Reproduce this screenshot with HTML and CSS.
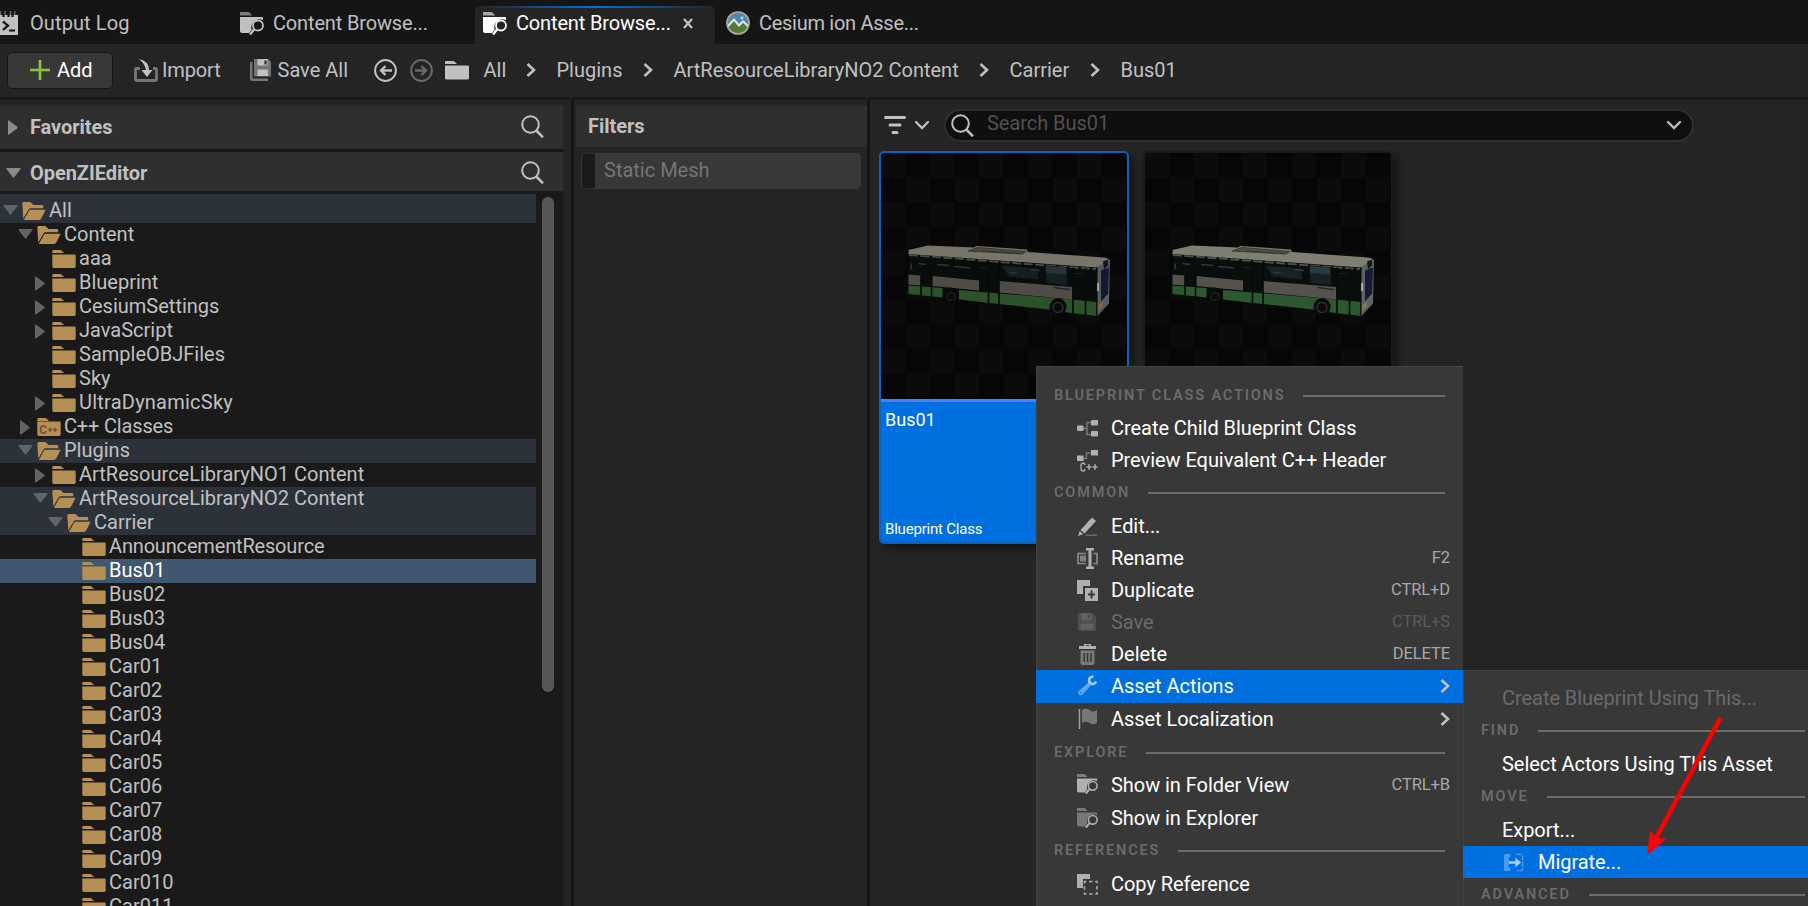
FILE: index.html
```html
<!DOCTYPE html>
<html lang="en">
<head>
<meta charset="utf-8">
<title>Content Browser</title>
<link rel="stylesheet" href="styles.css">
</head>
<body>
<svg class="defs" width="0" height="0">
  <symbol id="folder" viewBox="0 0 24 19"><path d="M0 1q0-1 1-1h7q1 0 2 1l2 2H0z"/><path d="M0 4.600h23q1 0 1 1V17q0 1.500-1.500 1.500H1.500Q0 18.500 0 17z"/></symbol>
  <symbol id="open" viewBox="0 0 24 19"><path d="M0 1.500Q0 0 1.500 0h6q1 0 2 1l2 2h9q1 0 1 1v2.500H8.500q-1.200 0-2 1.200L1 17z"/><path d="M7.500 8H24l-4.600 9q-.8 1.500-2.400 1.500H1.500z"/></symbol>
  <symbol id="cpp" viewBox="0 0 24 19"><path d="M0 1q0-1 1-1h7q1 0 2 1l2 2H0z"/><path d="M0 3.600h23q1 0 1 1V17q0 1.500-1.500 1.500H1.500Q0 18.500 0 17z"/><text x="2" y="16.500" font-size="13.500" font-weight="700" textLength="8" lengthAdjust="spacingAndGlyphs" fill="#6d5635">C</text><path d="M11 12h4.500M13.200 9.700v4.600M16 12h4.500M18.200 9.700v4.600" stroke="#6d5635" stroke-width="1.500"/></symbol>
  <symbol id="down" viewBox="0 0 15 10"><path d="M1 0h13q1 .3.500 1L8.200 9.300q-.7.700-1.400 0L.5 1Q0 .3 1 0z"/></symbol>
  <symbol id="right" viewBox="0 0 10 15"><path d="M0 1q.3-1 1-.5l8.300 6.300q.7.700 0 1.400L1 14.500Q.3 15 0 14z"/></symbol>
  <symbol id="search" viewBox="0 0 23 23"><g fill="none" stroke="currentColor" stroke-width="2"><circle cx="9.500" cy="9.500" r="8.300"/><path d="M15.300 15.500L22 22.300" stroke-width="2.500"/></g></symbol>
  <symbol id="chev" viewBox="0 0 10 14"><path d="M1.500 1l6.500 6-6.500 6" fill="none" stroke="currentColor" stroke-width="2.600"/></symbol>
  <symbol id="chevdown" viewBox="0 0 14 9"><path d="M1 1l6 6 6-6" fill="none" stroke="currentColor" stroke-width="2.300" stroke-linecap="round"/></symbol>
  <symbol id="browse" viewBox="0 0 24 24"><path d="M0 0h8q1 0 2 1l2 2.500H0z" opacity=".6"/><path d="M0 5h22.500q.5 0 .5 1v2.200a8 8 0 0 0-11.300 9.500L9 21H2q-2 0-2-2z"/><g fill="none" stroke="currentColor" stroke-width="1.800"><circle cx="18" cy="13.500" r="5"/><path d="M14.300 17.300L10 22.500" stroke-width="2.400"/></g></symbol>
  <symbol id="disk" viewBox="0 0 20 20"><path d="M1 0h15l4 4v15q0 1-1 1H1q-1 0-1-1V1q0-1 1-1z" opacity=".55"/><path d="M4 0h11v8H4zm7 1.500v5h2.500v-5zM3 12h14v6H3z" fill-rule="evenodd"/></symbol>
  <symbol id="bus" viewBox="0 0 246 246">
    <path d="M26.500 98L215 112l13-6-1 45-12 11.500L165 156 112 150.500 26.500 140z" fill="#080c0b"/>
    <path class="trim" d="M26.500 96.500L46 92l46 2 2.500-1.500 50 3.500 1.500 2.500 76 5.500q6 1 5.500 4l-12.500 6L26.500 100.500z"/>
    <path d="M86 97.500l10-3.500 48 4-4 2.500zM100 97.500l38 2.500" fill="#4d4a3d" stroke="#39372e"/>
    <path d="M27 101.500l40 3 70 5.500 77 5.500" fill="none" stroke="#4a4c43" stroke-width="1.800" stroke-dasharray="9 2.500"/>
    <path d="M120 112l36 3v11l-30-3zM163 112l22 1.500v18l-20-2z" fill="#14201f"/><path d="M164 113l20 1v7l-20-1.500z" fill="#26343a"/>
    <path d="M29 110v6M36 110l8 1M55 111l12 1M72 113l16 1.500M127 119l8 .5M148 116l10 1" stroke="#2d3531" stroke-width="1.600"/>
    <path class="side" d="M26.500 121l12.500 1v10l-12.500-1zM50.500 122.500l46.500 4.500v10l-46.500-4.500zM117 127.500l73.500 6v12.500l-73.500-7z"/>
    <path class="green" d="M26.500 132l34 2.500v9.500l-34-3.500zM77 136.500l113 9.500 25 2.500v14L185 159l-18-3-55-6-35-4z"/>
    <path d="M39 122v20M49.500 122v21M106.500 110v40M117 110v42M191 114v46M203.500 115v49M215 114v49" stroke="#070a08" stroke-width="1.600"/>
    <path d="M97 114h9M192 120h10" stroke="#181c1a" stroke-width="1"/>
    <ellipse cx="69" cy="142" rx="7" ry="8" fill="#090909"/><ellipse cx="176" cy="153.500" rx="8.500" ry="9" fill="#090909"/>
    <circle cx="176" cy="154" r="5" fill="none" stroke="#2b2c2b" stroke-width="1.500"/><circle cx="69" cy="143" r="4" fill="none" stroke="#1d1e1d" stroke-width="1.500"/>
    <path d="M215.500 113l12.500-7-1 44-11.500 12.500z" fill="#555b60"/>
    <path d="M219 117l8-3-1 26-7 8z" fill="#121a30"/><path d="M221 108l5-2v6l-4 4z" fill="#12171c"/>
    <path d="M215 130l2-1v8l-2 1z" fill="#a1a49e"/><path d="M172 134l7 1 9 1" fill="none" stroke="#242424" stroke-width="1.500"/>
    <path d="M216 152l5-4v5l-5 5z" fill="#806850"/>
  </symbol>
</svg>

<header class="tabs">
  <div class="tab tab-log">
    <svg class="log-icon" viewBox="0 0 18 24"><path d="M-1 2h19v22H-1z" fill="#c0c0c0"/><path d="M-1 2h19v2H-1z" fill="#151515"/><path d="M3.500 1v5M8.500 1v5M12.500 1v5" stroke="#151515" stroke-width="2.200"/><path d="M5 0v4M10.500 0v4M14.700 0v4M.5 0v4" stroke="#666" stroke-width="1.500"/><path d="M3 10.500l5 4.200L3 19" fill="none" stroke="#151515" stroke-width="2.300"/><path d="M9 19.500h6" stroke="#151515" stroke-width="2"/></svg>
    <span class="t">Output Log</span>
  </div>
  <div class="tab tab-cb"><svg class="i24"><use href="#browse"/></svg><span class="t">Content Browse...</span></div>
  <div class="tab active"><svg class="i24"><use href="#browse"/></svg><span class="t">Content Browse...</span><svg class="close" viewBox="0 0 10 11"><path d="M1 1l8 9M9 1L1 10" stroke="currentColor" stroke-width="2.200"/></svg></div>
  <div class="tab tab-cesium">
    <svg class="i24" viewBox="0 0 24 24"><circle cx="12" cy="12" r="11" fill="#5385b2"/><path d="M2 16l6-7 5 5 3-3 6 5q-3 7-10 7T2 16z" fill="#547836"/><path d="M1.500 15.500L8 8.500l5 6 4-4 5.500 5" fill="none" stroke="#e1e5df" stroke-width="2"/><circle cx="16" cy="7" r="1.400" fill="#bcd3e5"/><circle cx="12" cy="12" r="11" fill="none" stroke="#aaa99e" stroke-width="1.700"/></svg>
    <span class="t">Cesium ion Asse...</span>
  </div>
</header>

<nav class="toolbar">
  <div class="add"><svg viewBox="0 0 20 20"><path d="M10 0v20M0 10h20" stroke="#8bc53f" stroke-width="2.600"/></svg><span class="t">Add</span></div>
  <svg class="import" viewBox="0 0 24 23"><path d="M6 9.500H2.500q-1 0-1 1V20q0 1.500 1.500 1.500h18q1.500 0 1.500-1.500V10.500q0-1-1-1H19" fill="none" stroke="#757575" stroke-width="2.800"/><path d="M5 0q10 2 10 11h3.500l-5.500 7-5.500-7H12Q11 5 5 0z" fill="#c0c0c0"/></svg>
  <span class="t import-t">Import</span>
  <svg class="saveall" viewBox="0 0 21 22"><path d="M0 3h2.500v16.500H18V22H2q-2 0-2-2z" fill="#757575"/><path d="M4 0h14l3 3v14.500H4z" fill="#757575"/><path d="M7.500 0h10v6.500h-10zM7.500 10.500H18V17H7.500z" fill="#c0c0c0"/><path d="M14.500 1.500h2v4h-2z" fill="#242424"/></svg>
  <span class="t saveall-t">Save All</span>
  <svg class="nav-back" viewBox="0 0 23 23"><g fill="none" stroke="#c0c0c0" stroke-width="2"><circle cx="11.500" cy="11.500" r="10.400"/><path d="M18 11.500H7M11.500 7L7 11.500l4.500 4.500" stroke-width="2.400"/></g></svg>
  <svg class="nav-fwd" viewBox="0 0 23 23"><g fill="none" stroke="#696969" stroke-width="2"><circle cx="11.500" cy="11.500" r="10.400"/><path d="M5 11.500h11M11.500 7l4.500 4.500-4.500 4.500" stroke-width="2.400"/></g></svg>
  <svg class="crumb-folder"><use href="#folder"/></svg>
  <div class="crumbs">
    <span class="t c1">All</span><svg class="chev"><use href="#chev"/></svg>
    <span class="t c2">Plugins</span><svg class="chev"><use href="#chev"/></svg>
    <span class="t c3">ArtResourceLibraryNO2 Content</span><svg class="chev"><use href="#chev"/></svg>
    <span class="t c4">Carrier</span><svg class="chev"><use href="#chev"/></svg>
    <span class="t c5">Bus01</span>
  </div>
</nav>

<main class="main">
  <aside class="sources">
    <div class="head fav"><svg class="ar"><use href="#right"/></svg><b>Favorites</b><svg class="search"><use href="#search"/></svg></div>
    <div class="head proj"><svg class="ad"><use href="#down"/></svg><b>OpenZIEditor</b><svg class="search"><use href="#search"/></svg></div>
    <div class="tree">
      <div class="rows">
        <div class="row d0 path first"><svg class="ad"><use href="#down"/></svg><svg class="fo"><use href="#open"/></svg><span>All</span></div>
        <div class="row d1"><svg class="ad"><use href="#down"/></svg><svg class="fo"><use href="#open"/></svg><span>Content</span></div>
        <div class="row d2"><i></i><svg class="fo"><use href="#folder"/></svg><span>aaa</span></div>
        <div class="row d2"><svg class="ar"><use href="#right"/></svg><svg class="fo"><use href="#folder"/></svg><span>Blueprint</span></div>
        <div class="row d2"><svg class="ar"><use href="#right"/></svg><svg class="fo"><use href="#folder"/></svg><span>CesiumSettings</span></div>
        <div class="row d2"><svg class="ar"><use href="#right"/></svg><svg class="fo"><use href="#folder"/></svg><span>JavaScript</span></div>
        <div class="row d2"><i></i><svg class="fo"><use href="#folder"/></svg><span>SampleOBJFiles</span></div>
        <div class="row d2"><i></i><svg class="fo"><use href="#folder"/></svg><span>Sky</span></div>
        <div class="row d2"><svg class="ar"><use href="#right"/></svg><svg class="fo"><use href="#folder"/></svg><span class="wide">UltraDynamicSky</span></div>
        <div class="row d1"><svg class="ar"><use href="#right"/></svg><svg class="fo"><use href="#cpp"/></svg><span class="tight">C++ Classes</span></div>
        <div class="row d1 path"><svg class="ad"><use href="#down"/></svg><svg class="fo"><use href="#open"/></svg><span>Plugins</span></div>
        <div class="row d2"><svg class="ar"><use href="#right"/></svg><svg class="fo"><use href="#folder"/></svg><span>ArtResourceLibraryNO1 Content</span></div>
        <div class="row d2 path"><svg class="ad"><use href="#down"/></svg><svg class="fo"><use href="#open"/></svg><span>ArtResourceLibraryNO2 Content</span></div>
        <div class="row d3 path"><svg class="ad"><use href="#down"/></svg><svg class="fo"><use href="#open"/></svg><span>Carrier</span></div>
        <div class="row d4"><i></i><svg class="fo"><use href="#folder"/></svg><span class="tight">AnnouncementResource</span></div>
        <div class="row d4 selected"><i></i><svg class="fo"><use href="#folder"/></svg><span>Bus01</span></div>
        <div class="row d4"><i></i><svg class="fo"><use href="#folder"/></svg><span>Bus02</span></div>
        <div class="row d4"><i></i><svg class="fo"><use href="#folder"/></svg><span>Bus03</span></div>
        <div class="row d4"><i></i><svg class="fo"><use href="#folder"/></svg><span>Bus04</span></div>
        <div class="row d4"><i></i><svg class="fo"><use href="#folder"/></svg><span>Car01</span></div>
        <div class="row d4"><i></i><svg class="fo"><use href="#folder"/></svg><span>Car02</span></div>
        <div class="row d4"><i></i><svg class="fo"><use href="#folder"/></svg><span>Car03</span></div>
        <div class="row d4"><i></i><svg class="fo"><use href="#folder"/></svg><span>Car04</span></div>
        <div class="row d4"><i></i><svg class="fo"><use href="#folder"/></svg><span>Car05</span></div>
        <div class="row d4"><i></i><svg class="fo"><use href="#folder"/></svg><span>Car06</span></div>
        <div class="row d4"><i></i><svg class="fo"><use href="#folder"/></svg><span>Car07</span></div>
        <div class="row d4"><i></i><svg class="fo"><use href="#folder"/></svg><span>Car08</span></div>
        <div class="row d4"><i></i><svg class="fo"><use href="#folder"/></svg><span>Car09</span></div>
        <div class="row d4"><i></i><svg class="fo"><use href="#folder"/></svg><span>Car010</span></div>
        <div class="row d4"><i></i><svg class="fo"><use href="#folder"/></svg><span>Car011</span></div>
      </div>
      <div class="scrollbar"></div>
    </div>
  </aside>
  <section class="filters">
    <div class="head"><b>Filters</b></div>
    <div class="pill"><span>Static Mesh</span></div>
  </section>
  <section class="assets">
    <div class="searchbar">
      <svg class="funnel" viewBox="0 0 22 18"><path d="M1.500 1.500h19M6 9h10M9 16.500h4" stroke="#c0c0c0" stroke-width="3" stroke-linecap="round"/></svg>
      <svg class="chevdown"><use href="#chevdown"/></svg>
      <div class="field"><svg class="search"><use href="#search"/></svg><span>Search Bus01</span><svg class="chevdown"><use href="#chevdown"/></svg></div>
    </div>
    <div class="tiles">
      <div class="tile on">
        <div class="thumb"><svg class="bus warm"><use href="#bus"/></svg></div>
        <div class="info"><span class="name">Bus01</span><span class="kind">Blueprint Class</span></div>
      </div>
      <div class="tile"><div class="thumb"><svg class="bus cool"><use href="#bus"/></svg></div><div class="info"></div></div>
    </div>
  </section>
</main>

<div class="menu ctx">
  <div class="sec h33"><b>BLUEPRINT CLASS ACTIONS</b><hr></div>
  <div class="item"><svg viewBox="0 0 21 21"><path d="M5 10.500h5M10 4v13M9.500 4.500h5M9.500 16.500h5" fill="none" stroke="#777" stroke-width="1.500"/><rect y="7.500" width="6.500" height="5.500" rx="1"/><rect x="14" y="2" width="7" height="5.500" rx="1"/><rect x="14" y="13" width="7" height="5.500" rx="1"/></svg><span>Create Child Blueprint Class</span></div>
  <div class="item"><svg viewBox="0 0 21 21"><path d="M6 8.500h3.500V3h5" fill="none" stroke="#777" stroke-width="1.500"/><rect y="5.500" width="6.500" height="5.500"/><rect x="14" y="0" width="7" height="5.500"/><path d="M8 15q-.5-2-2-2t-2 2v4q0 2 2 2t2-2M9.500 17h5M12 14v6M15.500 17h5M18 14v6" fill="none" stroke="currentColor" stroke-width="1.300"/></svg><span>Preview Equivalent C++ Header</span></div>
  <div class="sec h34"><b>COMMON</b><hr></div>
  <div class="item"><svg viewBox="0 0 21 21"><path d="M3.500 14L15 1.500l4 3.500L7.500 17.500zM2.700 15l3.500 3.200L1 20z"/><path d="M9 18.500h11v1.500H8z" opacity=".4"/></svg><span>Edit...</span></div>
  <div class="item"><svg viewBox="0 0 21 21"><path d="M9 5.500H1v10h8M16.500 5.500h3.500v10h-3.500" fill="none" stroke="#888" stroke-width="1.700"/><path d="M3 7.500h6v6H3z" opacity=".6"/><path d="M9 0h8v2.500h-2.500v16H17V21H9v-2.500h2.500v-16H9z"/></svg><span>Rename</span><em>F2</em></div>
  <div class="item"><svg viewBox="0 0 21 21"><path d="M0 0h13v6H6v8H0z"/><path d="M8 8h13v13H8zm5.500 2.500v3H11v2h2.500v3h2v-3H18v-2h-2.500v-3z" fill-rule="evenodd"/></svg><span>Duplicate</span><em>CTRL+D</em></div>
  <div class="item off"><svg viewBox="-1 -1 22 22"><use href="#disk" width="19" height="19"/></svg><span>Save</span><em>CTRL+S</em></div>
  <div class="item"><svg viewBox="0 0 21 21"><path d="M2 2h17v3H2zM7 2V0h7v2h-1.500V1.200h-4V2z"/><path d="M3.500 6.500h14V19q0 2-2 2h-10q-2 0-2-2zm3 2.500v9H8V9zm3.300 0v9h1.500V9zm3.400 0v9h1.500V9z" fill-rule="evenodd" opacity=".55"/></svg><span>Delete</span><em>DELETE</em></div>
  <div class="item hot h33"><svg viewBox="0 0 21 21"><path d="M11.500 7.500l2.500 2.500-8.500 9.500q-2 1.500-3.700 0-1.500-1.700 0-3.500zM3 17.500a.8.800 0 1 0 1.500 0 .8.800 0 0 0-1.500 0z" fill="#62a7f0" fill-rule="evenodd"/><path d="M16.500 1.800A3.600 3.600 0 1 0 19 6.500" fill="none" stroke="#a9cff8" stroke-width="2.600"/></svg><span>Asset Actions</span><svg class="chev"><use href="#chev"/></svg></div>
  <div class="item h33"><svg viewBox="0 0 21 21"><path d="M2.500 1v20" stroke="#a0a0a0" stroke-width="1.500"/><path d="M5 2q4-3 7.500 0t7.500 0v13q-4 2.500-7.500 0T5 15z" fill="#777"/></svg><span>Asset Localization</span><svg class="chev"><use href="#chev"/></svg></div>
  <div class="sec h33"><b>EXPLORE</b><hr></div>
  <div class="item h33"><svg><use href="#browse"/></svg><span>Show in Folder View</span><em>CTRL+B</em></div>
  <div class="item"><svg viewBox="0 0 24 24"><path d="M0 0h8q1 0 2 1l2 2.500H0z" fill="#777"/><path d="M0 5h22.500q.5 0 .5 1v2.200a8 8 0 0 0-11.300 9.500L9 21H2q-2 0-2-2z" fill="#777"/><g fill="none" stroke="currentColor" stroke-width="1.800"><circle cx="18" cy="13.500" r="5"/><path d="M14.300 17.300L10 22.500" stroke-width="2.400"/></g></svg><span>Show in Explorer</span></div>
  <div class="sec h34"><b>REFERENCES</b><hr></div>
  <div class="item"><svg viewBox="0 0 21 21"><path d="M0 0h13v5H6v9H0z"/><path d="M7.500 7.500H20V20H7.500z" fill="none" stroke="currentColor" stroke-width="1.500" stroke-dasharray="3.500 2.700" stroke-dashoffset="1.700"/></svg><span>Copy Reference</span></div>
</div>

<div class="menu sub">
  <div class="item off h33"><span>Create Blueprint Using This...</span></div>
  <div class="sec h33"><b>FIND</b><hr></div>
  <div class="item h33"><span>Select Actors Using This Asset</span></div>
  <div class="sec h33"><b>MOVE</b><hr></div>
  <div class="item h33"><span>Export...</span></div>
  <div class="item hot"><svg viewBox="0 0 22 20"><path d="M7.500 1H3Q1 1 1 3v14q0 2 2 2h4.500v-3.500H6V4.500h1.500z" fill="#4b9bf1"/><path d="M14 1.500h4.500q2 0 2 2v13q0 2-2 2H14" fill="none" stroke="#4b9bf1" stroke-width="1.500" stroke-dasharray="5.500 1"/><path d="M6 8.800h7V5l6 5-6 5v-3.800H6z" fill="#a5cef8"/></svg><span>Migrate...</span></div>
  <div class="sec h34"><b>ADVANCED</b><hr></div>
</div>

<svg class="pointer" viewBox="0 0 80 145"><path d="M78.500 6.500L14 127" stroke="#fe0000" stroke-width="4.500" stroke-linecap="round"/><path d="M6 142l3-25 5.500 7 11 2z" fill="#fe0000"/></svg>
</body>
</html>
```
FILE: styles.css
```css
* { box-sizing: border-box; }
body { margin: 0; width: 1808px; height: 906px; overflow: hidden; position: relative; background: #242424; color: #c0c0c0; font: 20px/24px Roboto, sans-serif; white-space: nowrap; display: flex; flex-direction: column; }
svg { display: block; flex: none; fill: currentColor; overflow: visible; }
.defs { position: absolute; }
b { font-weight: 700; }

.tabs { flex: none; height: 44px; background: #151515; display: flex; align-items: flex-end; }
.tab { display: flex; align-items: center; height: 38px; padding-bottom: 4px; }
.i24 { width: 24px; height: 24px; }
.log-icon { width: 18px; height: 24px; }
.tab-log { width: 240px; gap: 12px; letter-spacing: .1px; }
.tab-cb { width: 235px; gap: 9px; letter-spacing: -.15px; }
.tab-cb .i24, .active .i24 { transform: translateY(1px); }
.active { width: 240px; padding-left: 8px; gap: 9px; letter-spacing: -.15px; color: #fff; background: linear-gradient(90deg, #242424, #0070e0 50%, #242424) top / 100% 2px no-repeat #242424; border-radius: 5px 5px 0 0; }
.close { width: 10px; height: 11px; margin-left: auto; margin-right: 22px; color: #c0c0c0; }
.tab-cesium { padding-left: 11px; gap: 9px; letter-spacing: -.28px; }

.toolbar { flex: none; height: 56px; border-bottom: 3px solid #1a1a1a; display: flex; align-items: center; padding: 0 0 1px 7px; }
.add { width: 106px; height: 37px; border: 1px solid #151515; border-radius: 5px; background: #383838; color: #fff; display: flex; align-items: center; padding-left: 22px; gap: 7px; }
.add svg { width: 20px; height: 20px; }
.import { width: 24px; height: 23px; margin: 1px 0 0 21px; }
.import-t { width: 87px; padding-left: 4px; letter-spacing: -.15px; }
.saveall { width: 21px; height: 22px; margin-left: 4.500px; }
.saveall-t { width: 103px; padding-left: 7px; }
.nav-back, .nav-fwd { width: 23px; height: 23px; }
.nav-fwd { margin-left: 13px; }
.crumb-folder { width: 24px; height: 19px; margin-left: 12px; }
.crumbs { display: flex; align-items: center; margin-left: 15px; }
.chev { width: 10px; height: 14px; margin-right: 21px; }
.c1 { width: 42px; } .c2 { width: 86px; } .c3 { width: 305px; } .c4 { width: 80px; }

.main { flex: 1; min-height: 0; display: flex; }
.sources { width: 574px; padding-right: 8px; border-right: 3px solid #151515; padding-top: 6px; display: flex; flex-direction: column; }
.head { flex: none; background: #2f2f2f; display: flex; align-items: center; }
.head .search { width: 23px; height: 23px; margin-left: auto; margin-right: 19px; }
.head b { letter-spacing: -.05px; }
.fav { height: 46px; border-bottom: 3px solid #151515; padding-bottom: 2px; }
.fav .ar { width: 10px; height: 15px; margin: 1px 12px 0 8px; color: #8b8b8b; }
.proj { height: 42px; border-bottom: 3px solid #1a1a1a; padding-top: 2px; }
.proj .ad { width: 15px; height: 10px; margin: 0 9.500px 0 5.500px; color: #8b8b8b; }
.tree { flex: 1; min-height: 0; overflow: hidden; background: #1a1a1a; display: flex; }
.rows { width: 536px; }
.row { height: 24px; display: flex; align-items: center; }
.row span { transform: translateY(-1px); }
.row .wide { letter-spacing: .23px; }
.row .tight { letter-spacing: -.17px; }
.row.first { height: 29px; padding-top: 5px; }
.row .ad { width: 15px; height: 10px; margin: 0 4.500px 0 2.500px; color: #636363; transform: translateY(-1px); }
.row .ar { width: 10px; height: 15px; margin: 1px 7px 0 5px; color: #636363; }
.row i { width: 22px; }
.row .fo { width: 24px; height: 18.500px; margin-right: 3px; color: #b68f54; }
.d1 { padding-left: 15px; } .d2 { padding-left: 30px; } .d3 { padding-left: 45px; } .d4 { padding-left: 60px; }
.path { background: #2c323a; }
.selected { background: #40576f; color: #fff; }
.scrollbar { width: 12px; height: 495px; margin: 3px 0 0 6px; border-radius: 6px; background: #575757; }

.filters { width: 296px; padding: 6px 0 0 2px; border-right: 3px solid #151515; }
.filters .head { height: 41px; padding: 0 0 1px 12px; }
.pill { margin: 6px 6px 0; height: 36px; border: 1px solid #383838; border-left: 13px solid #1a1a1a; border-radius: 5px; background: #383838; color: #757575; display: flex; align-items: center; padding: 0 0 2px 9px; box-shadow: -1px 0 0 #383838; }

.assets { flex: 1; padding-left: 9px; }
.searchbar { height: 51px; display: flex; align-items: center; padding: 0 0 1px 5px; }
.funnel { width: 22px; height: 18px; }
.chevdown { width: 14px; height: 9px; margin-left: 9px; }
.field { width: 750px; height: 33px; margin-left: 15px; border: 2px solid #2f2f2f; border-radius: 17px; background: #0f0f0f; color: #c0c0c0; display: flex; align-items: center; padding: 0 11px 0 5px; }
.field .search { width: 23px; height: 23px; margin-right: 13px; }
.field span { color: #505050; margin-top: -5px; letter-spacing: -.05px; }
.field .chevdown { margin-left: auto; }
.tiles { display: flex; gap: 14px; }
.tile { width: 250px; height: 393px; border: 2px solid #1b1b1b; border-radius: 5px; overflow: hidden; box-shadow: 5px 5px 6px #161616; background: #1b1b1b; display: flex; flex-direction: column; }
.tile.on { border-color: #0b62bd; }
.thumb { width: 246px; height: 246px; background: conic-gradient(#060606 25%, #0b0b0b 0 50%, #060606 0 75%, #0b0b0b 0) 0 0 / 49px 49px; }
.bus { width: 246px; height: 246px; transform: translate(1px, .5px); filter: blur(.4px); }
.side { fill: #4f4c48; } .green { fill: #2b5229; } .trim { fill: #77746a; }
.cool .trim { fill: #6b7070; }
.cool { filter: hue-rotate(8deg) brightness(1.08) blur(.4px); }
.info { flex: 1; display: flex; flex-direction: column; justify-content: space-between; }
.on .info { margin: 0 -2px -2px; border-top: 3px solid #4a80ff; background: #0070e0; color: #fff; padding: 6px 6px 5px; font-size: 18px; }
.kind { font-size: 15px; line-height: 20px; letter-spacing: -.2px; }

.menu { position: absolute; background: #383838; border: 1px solid #434343; border-right: 0; color: #fff; }
.ctx { left: 1036px; top: 366px; width: 427px; height: 545px; padding-top: 12px; }
.sub { left: 1463px; top: 670px; width: 345px; height: 240px; padding-top: 10px; }
.item { height: 32px; display: flex; align-items: center; padding: 0 13px 0 40px; }
.item > span { letter-spacing: -.05px; }
.item > svg:first-child { width: 21px; height: 21px; color: #b0b0b0; margin-right: 13px; }
.item em { margin-left: auto; font-style: normal; font-size: 16.500px; letter-spacing: -.1px; color: #a8a8a8; }
.item .chev { margin: 0 0 0 auto; color: #c0c0c0; }
.h33 { height: 33px; } .h34 { height: 34px; }
.ctx .item.h33 { padding-bottom: 2px; }
.off, .off em { color: #6a6a6a; }
.item.off em { color: #5a5a5a; }
.item.off > svg:first-child { color: #626262; }
.hot { background: #0070e0; margin-left: -1px; padding-left: 41px; }
.sec { display: flex; align-items: center; padding: 0 18px 0 17px; color: #6b6b6b; font-size: 14.500px; letter-spacing: 1.850px; }
.sec b { font-weight: 600; }
.sec hr { flex: 1; border: 0; height: 2px; margin: 0 0 0 18px; background: #6b6b6b; }
.sub .item { padding-left: 38px; }
.sub .item.hot { padding-left: 40px; }
.sub .item.hot > svg:first-child { margin-right: 14px; }
.sub .sec { padding-right: 3px; }
.pointer { position: absolute; left: 1641px; top: 713px; width: 80px; height: 145px; }
```
